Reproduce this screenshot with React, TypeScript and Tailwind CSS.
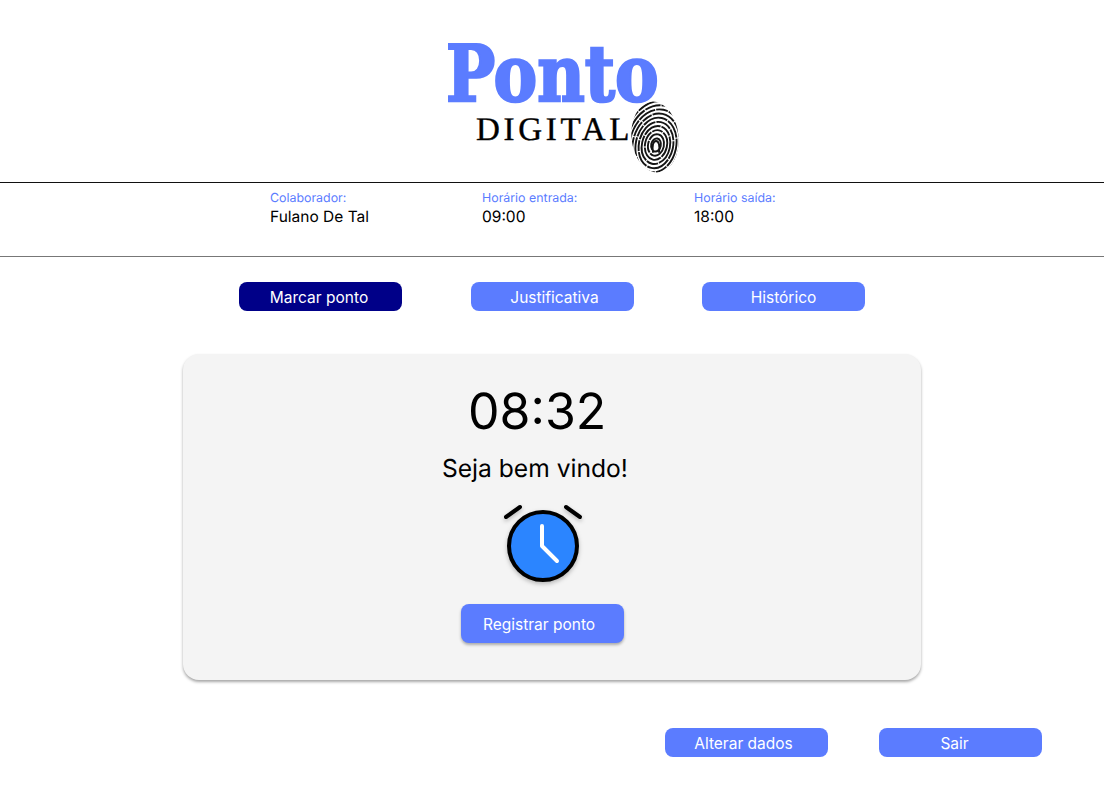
const inter = "font-['Inter',sans-serif] [text-rendering:geometricPrecision]";

const ridges = [5.5, 9, 12.5, 16, 19.5, 23, 26.5, 30, 33.5, 37, 40.5];

function Fingerprint() {
  return (
    <svg width="52" height="74" viewBox="0 0 52 74" fill="none" stroke="#151515" strokeWidth="1.9">
      <defs>
        <clipPath id="print">
          <ellipse cx="26" cy="37" rx="23.5" ry="35.5" transform="rotate(-6 26 37)" />
        </clipPath>
      </defs>
      <g clipPath="url(#print)">
        <path d="M24 52 C23 46 24 41 27 41 C30 41 31 46 30 52" strokeLinecap="round" />
        {ridges.map((r, i) => (
          <ellipse
            key={r}
            cx="27"
            cy="45"
            rx={r * 0.88}
            ry={r * 1.2}
            transform="rotate(12 27 45)"
            strokeDasharray={i % 2 ? "19 1 12 1 26 1" : "11 1 24 1 16 1"}
          />
        ))}
      </g>
    </svg>
  );
}

function AlarmClock() {
  return (
    <svg width="80" height="80" viewBox="0 0 80 80" fill="none" strokeLinecap="round" className="drop-shadow-[0_2px_2px_rgba(0,0,0,0.25)]">
      <path d="M3 14 L17 4 M77 14 L63 4" stroke="#000" strokeWidth="4" />
      <circle cx="40" cy="43" r="34" fill="#2b85ff" stroke="#000" strokeWidth="4" />
      <path d="M39 23 L39 43 L54 58" stroke="#fff" strokeWidth="4" strokeLinejoin="round" />
    </svg>
  );
}

function Info({ label, value }: { label: string; value: string }) {
  return (
    <div className="w-[212px]">
      <p className="text-[12.4px] leading-[15px] text-[#5b7cff]">{label}</p>
      <p className="mt-[3px] text-[15.5px] leading-[18px] text-black">{value}</p>
    </div>
  );
}

function NavButton({ label, active, className }: { label: string; active?: boolean; className?: string }) {
  return (
    <button className={`h-[29px] w-[163px] rounded-lg pt-[2px] text-[15.5px] text-white ${active ? "bg-[#000088]" : "bg-[#5b7cff]"} ${className}`}>
      {label}
    </button>
  );
}

export default function App() {
  return (
    <div className={`${inter} h-[785px] w-[1104px] overflow-hidden bg-white`}>
      <header className="flex h-[183px] justify-center border-b border-[#111]">
        <div className="relative h-[182px] w-[240px]">
          <p className="absolute left-[14px] top-[40px] origin-left scale-x-[0.84] font-['DejaVu_Serif',serif] text-[78px] font-bold leading-[70px] text-[#5b7cff] [-webkit-text-stroke:2.5px_#5b7cff]">
            Ponto
          </p>
          <p className="absolute left-[44px] top-[112px] font-['Liberation_Serif',serif] text-[33px] leading-[36px] tracking-[3.7px] text-black [-webkit-text-stroke:0.4px_#000]">
            DIGITAL
          </p>
          <div className="absolute left-[197px] top-[100px]">
            <Fingerprint />
          </div>
        </div>
      </header>

      <section className="flex h-[74px] border-b border-[#777] pl-[270px] pt-[7px]">
        <Info label="Colaborador:" value="Fulano De Tal" />
        <Info label="Horário entrada:" value="09:00" />
        <Info label="Horário saída:" value="18:00" />
      </section>

      <nav className="flex pl-[239px] pt-[25px]">
        <NavButton label="Marcar ponto" active className="pr-[3px]" />
        <NavButton label="Justificativa" className="ml-[69px] pl-[4px]" />
        <NavButton label="Histórico" className="ml-[68px]" />
      </nav>

      <main className="ml-[183px] mt-[43px] flex h-[326px] w-[738px] flex-col items-start rounded-2xl bg-[#f4f4f4] pt-[29px] shadow-[0_2px_3px_rgba(0,0,0,0.35)]">
        <p className="ml-[285px] text-[50px] leading-[58px] text-black">08:32</p>
        <p className="ml-[259px] mt-[13px] text-[24.6px] leading-[29px] text-black">Seja bem vindo!</p>
        <div className="ml-[320px] mt-[20px]">
          <AlarmClock />
        </div>
        <button className="ml-[278px] mt-[21px] h-[39px] w-[163px] rounded-lg bg-[#5b7cff] pr-[7px] pt-[2px] text-[15.5px] text-white shadow-[0_2px_3px_rgba(0,0,0,0.3)]">
          Registrar ponto
        </button>
      </main>

      <footer className="flex pl-[665px] pt-[48px]">
        <NavButton label="Alterar dados" className="pr-[6px]" />
        <NavButton label="Sair" className="ml-[51px] pr-[12px]" />
      </footer>
    </div>
  );
}
